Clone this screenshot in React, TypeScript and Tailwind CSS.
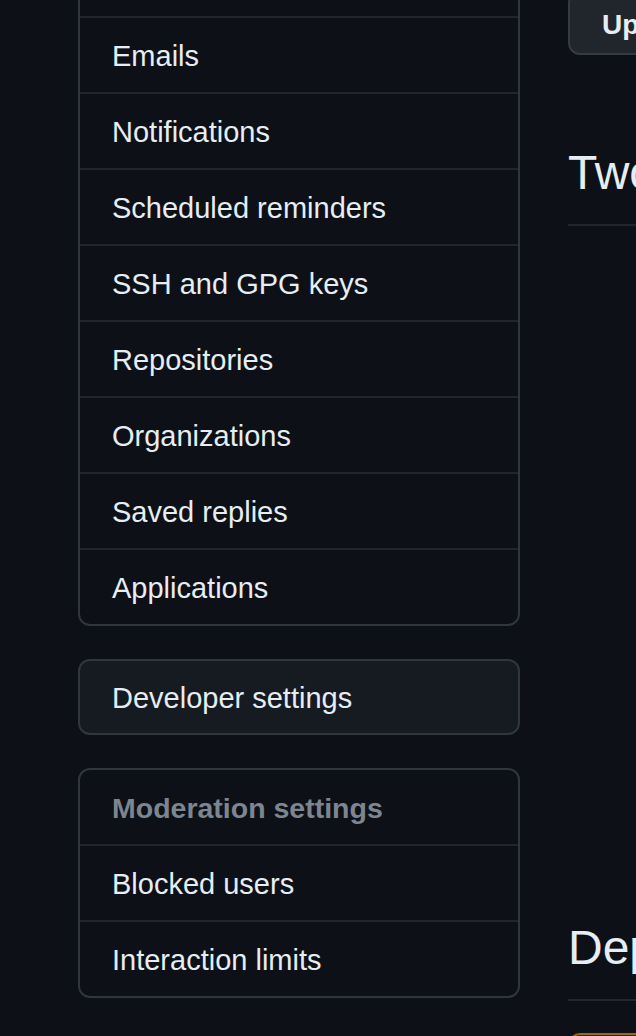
import React from "react";

const font = { fontFamily: "'Liberation Sans', Arial, sans-serif" };

function Row({ label, first }: { label: string; first?: boolean }) {
  return (
    <div
      className={`flex items-center pl-[32px] pt-[3px] text-[29px] text-[#e6edf3] ${
        first ? "h-[74px]" : "h-[76px] border-t-2 border-[#21262d]"
      }`}
    >
      {label}
    </div>
  );
}

export default function App() {
  const mainItems = [
    "Billing and plans",
    "Emails",
    "Notifications",
    "Scheduled reminders",
    "SSH and GPG keys",
    "Repositories",
    "Organizations",
    "Saved replies",
    "Applications",
  ];
  return (
    <div className="h-[1036px] w-[636px] overflow-hidden bg-[#0d1117]" style={font}>
      <div className="flex pl-[78px] gap-[48px]">
        <div className="w-[442px] flex-none -mt-[60px] flex flex-col">
          <div className="rounded-[12px] border-2 border-[#30363d] overflow-hidden">
            {mainItems.map((l, i) => (
              <Row key={l} label={l} first={i === 0} />
            ))}
          </div>
          <div className="mt-[33px] rounded-[12px] border-2 border-[#30363d] bg-[#161b22] h-[76px] flex items-center pl-[32px] pt-[3px] text-[29px] text-[#e6edf3]">
            Developer settings
          </div>
          <div className="mt-[33px] rounded-[12px] border-2 border-[#30363d] overflow-hidden">
            <div className="h-[74px] flex items-center pl-[32px] pt-[3px] text-[28.5px] font-bold text-[#7d8590]">
              Moderation settings
            </div>
            <Row label="Blocked users" />
            <Row label="Interaction limits" />
          </div>
        </div>
        <div className="w-[700px] flex-none flex flex-col">
          <div className="-mt-[9px]">
            <div className="inline-flex items-center h-[64px] px-[32px] pt-[3px] rounded-[12px] border-2 border-[#363b42] bg-[#21262d] text-[28px] font-bold text-[#e6edf3]">
              Update password
            </div>
          </div>
          <div className="mt-[88px] border-b-2 border-[#21262d] pb-[21px]">
            <h2 className="text-[48px] leading-[60px] text-[#e6edf3] font-normal">
              Two-factor authentication
            </h2>
          </div>
          <div className="h-[692px]" />
          <div className="border-b-2 border-[#21262d] pb-[21px]">
            <h2 className="text-[48px] leading-[60px] text-[#e6edf3] font-normal">
              Deploy keys
            </h2>
          </div>
          <div className="mt-[32px] h-[80px] rounded-[12px] border-2 border-[#9e6a03] bg-[#bb800926]" />
        </div>
      </div>
    </div>
  );
}
